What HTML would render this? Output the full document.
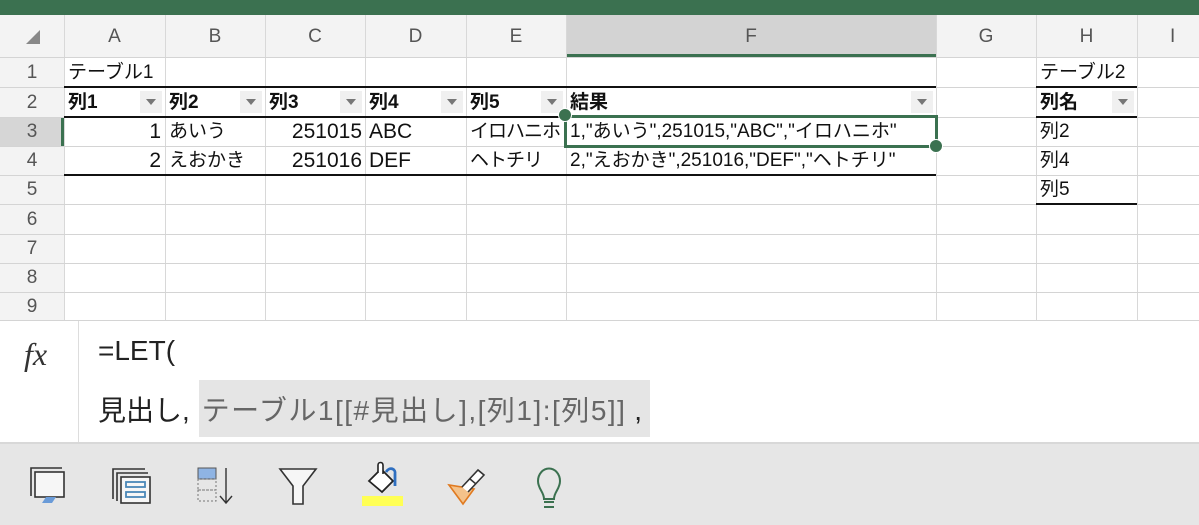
<!DOCTYPE html>
<html><head><meta charset="utf-8"><style>
*{margin:0;padding:0;box-sizing:border-box}
body{width:1199px;height:525px;overflow:hidden;background:#fff;position:relative;font-family:"Liberation Sans","Noto Sans CJK JP",sans-serif;}
.a{position:absolute}
.hl{position:absolute;background:#d4d4d4}
.vl{position:absolute;background:#d8d8d8;width:1px}
.ch{position:absolute;top:16px;height:41px;line-height:41px;text-align:center;font-size:19px;color:#555}
.rh{position:absolute;left:0;width:64px;text-align:center;font-size:19px;color:#555;height:29px;line-height:29px}
.c{position:absolute;font-size:19px;color:#111;height:29px;line-height:29px;white-space:nowrap}
.n{font-size:21px}
.b{font-weight:bold}
.dd{position:absolute;width:0;height:0;border-left:5px solid transparent;border-right:5px solid transparent;border-top:6px solid #777}
.ddb{position:absolute;width:22px;height:22px;background:#f0f0f0}
.tl{position:absolute;height:2px;background:#111}
</style></head><body>
<div class="a" style="left:0;top:0;width:1199px;height:15px;background:#3b7150"></div>
<div class="a" style="left:0;top:15px;width:1199px;height:42px;background:#f3f3f3"></div>
<div class="a" style="left:566px;top:15px;width:370px;height:42px;background:#d3d3d3"></div>
<div class="a" style="left:566px;top:54px;width:370px;height:3px;background:#3b7150"></div>
<div class="a" style="left:0;top:57px;width:64px;height:264px;background:#f3f3f3"></div>
<div class="a" style="left:0;top:117px;width:64px;height:29px;background:#d6d6d6"></div>
<div class="a" style="left:61px;top:117px;width:3px;height:29px;background:#3b7150"></div>
<svg class="a" style="left:24px;top:28px" width="18" height="18"><polygon points="16,2 16,16 2,16" fill="#888"/></svg>
<div class="vl" style="left:64px;top:15px;height:306px"></div>
<div class="vl" style="left:165px;top:15px;height:306px"></div>
<div class="vl" style="left:265px;top:15px;height:306px"></div>
<div class="vl" style="left:365px;top:15px;height:306px"></div>
<div class="vl" style="left:466px;top:15px;height:306px"></div>
<div class="vl" style="left:566px;top:15px;height:306px"></div>
<div class="vl" style="left:936px;top:15px;height:306px"></div>
<div class="vl" style="left:1036px;top:15px;height:306px"></div>
<div class="vl" style="left:1137px;top:15px;height:306px"></div>
<div class="hl" style="left:0;top:57px;width:1199px;height:1px"></div>
<div class="hl" style="left:0;top:87px;width:1199px;height:1px"></div>
<div class="hl" style="left:0;top:117px;width:1199px;height:1px"></div>
<div class="hl" style="left:0;top:146px;width:1199px;height:1px"></div>
<div class="hl" style="left:0;top:175px;width:1199px;height:1px"></div>
<div class="hl" style="left:0;top:204px;width:1199px;height:1px"></div>
<div class="hl" style="left:0;top:234px;width:1199px;height:1px"></div>
<div class="hl" style="left:0;top:263px;width:1199px;height:1px"></div>
<div class="hl" style="left:0;top:292px;width:1199px;height:1px"></div>
<div class="hl" style="left:0;top:320px;width:1199px;height:1px"></div>
<div class="ch" style="left:64px;width:101px">A</div>
<div class="ch" style="left:165px;width:100px">B</div>
<div class="ch" style="left:265px;width:100px">C</div>
<div class="ch" style="left:365px;width:101px">D</div>
<div class="ch" style="left:466px;width:100px">E</div>
<div class="ch" style="left:566px;width:370px">F</div>
<div class="ch" style="left:936px;width:100px">G</div>
<div class="ch" style="left:1036px;width:101px">H</div>
<div class="ch" style="left:1137px;width:62px;text-align:left;padding-left:33px">I</div>
<div class="rh" style="top:58px">1</div><div class="rh" style="top:88px">2</div><div class="rh" style="top:117px">3</div><div class="rh" style="top:146px">4</div><div class="rh" style="top:175px">5</div><div class="rh" style="top:205px">6</div><div class="rh" style="top:234px">7</div><div class="rh" style="top:263px">8</div><div class="rh" style="top:292px">9</div>
<div class="tl" style="left:64px;top:86px;width:872px"></div>
<div class="tl" style="left:64px;top:116px;width:872px"></div>
<div class="tl" style="left:64px;top:174px;width:872px"></div>
<div class="tl" style="left:1036px;top:86px;width:101px"></div>
<div class="tl" style="left:1036px;top:116px;width:101px"></div>
<div class="tl" style="left:1036px;top:203px;width:101px"></div>
<div class="c" style="left:68px;top:58px">テーブル1</div>
<div class="c" style="left:1040px;top:58px">テーブル2</div>
<div class="c b" style="left:68px;top:88px">列1</div>
<div class="c b" style="left:169px;top:88px">列2</div>
<div class="c b" style="left:269px;top:88px">列3</div>
<div class="c b" style="left:369px;top:88px">列4</div>
<div class="c b" style="left:470px;top:88px">列5</div>
<div class="c b" style="left:570px;top:88px">結果</div>
<div class="c b" style="left:1040px;top:88px">列名</div>
<div class="ddb" style="left:140px;top:91px"></div><div class="dd" style="left:146px;top:99px"></div>
<div class="ddb" style="left:240px;top:91px"></div><div class="dd" style="left:246px;top:99px"></div>
<div class="ddb" style="left:340px;top:91px"></div><div class="dd" style="left:346px;top:99px"></div>
<div class="ddb" style="left:441px;top:91px"></div><div class="dd" style="left:447px;top:99px"></div>
<div class="ddb" style="left:541px;top:91px"></div><div class="dd" style="left:547px;top:99px"></div>
<div class="ddb" style="left:911px;top:91px"></div><div class="dd" style="left:917px;top:99px"></div>
<div class="ddb" style="left:1112px;top:91px"></div><div class="dd" style="left:1118px;top:99px"></div>
<div class="c n" style="left:64px;width:97px;text-align:right;top:117px">1</div>
<div class="c n" style="left:64px;width:97px;text-align:right;top:146px">2</div>
<div class="c" style="left:169px;top:117px">あいう</div>
<div class="c" style="left:169px;top:146px">えおかき</div>
<div class="c n" style="left:265px;width:97px;text-align:right;top:117px">251015</div>
<div class="c n" style="left:265px;width:97px;text-align:right;top:146px">251016</div>
<div class="c n" style="left:369px;top:117px">ABC</div>
<div class="c n" style="left:369px;top:146px">DEF</div>
<div class="c" style="left:470px;top:117px;letter-spacing:-1px">イロハニホ</div>
<div class="c" style="left:470px;top:146px;letter-spacing:-1px">ヘトチリ</div>
<div class="c" style="left:570px;top:117px">1,"あいう",251015,"ABC","イロハニホ"</div>
<div class="c" style="left:570px;top:146px">2,"えおかき",251016,"DEF","ヘトチリ"</div>
<div class="c" style="left:1040px;top:117px">列2</div>
<div class="c" style="left:1040px;top:146px">列4</div>
<div class="c" style="left:1040px;top:175px">列5</div>
<div class="a" style="left:564px;top:115px;width:374px;height:33px;border:3px solid #3b7150;border-top:none"></div>
<div class="a" style="left:566px;top:115px;width:370px;height:3px;background:#3b7150"></div>
<div class="a" style="left:558px;top:108px;width:14px;height:14px;border-radius:50%;background:#3b7150;border:1px solid #fff"></div>
<div class="a" style="left:929px;top:139px;width:14px;height:14px;border-radius:50%;background:#3b7150;border:1px solid #fff"></div>
<div class="a" style="left:78px;top:321px;width:1px;height:122px;background:#ddd"></div>
<div class="a" style="left:24px;top:336px;font-family:'Liberation Serif',serif;font-style:italic;font-size:32px;color:#333">fx</div>
<div class="a" style="left:199px;top:380px;width:451px;height:57px;background:#e5e5e5"></div>
<div class="a" style="left:98px;top:335px;font-size:28px;color:#222;white-space:nowrap">=LET(</div>
<div class="a" style="left:98px;top:389px;font-size:28px;color:#222;white-space:nowrap">見出し, <span style="color:#666;letter-spacing:1.5px;margin-left:4px">テーブル1[[#見出し],[列1]:[列5]]</span> ,</div>
<div class="a" style="left:0;top:442px;width:1199px;height:83px;background:#e6e6e6;border-top:2px solid #d8d8d8"></div>
<svg class="a" style="left:0;top:442px" width="600" height="83">
<g fill="none" stroke="#333" stroke-width="1.6">
<path d="M31 54V26h31"/><rect x="35" y="30" width="29" height="25" fill="#f6f6f6"/>
<path d="M113 57V27h32"/><path d="M117 59V31h31"/><rect x="121" y="35" width="29" height="26" fill="#f6f6f6"/>
</g>
<path d="M42 61l4-6h10l-4 6z" fill="#6a9bd8"/>
<g fill="none" stroke="#4a88b8" stroke-width="1.8"><rect x="126" y="40" width="19" height="5"/><rect x="126" y="50" width="19" height="5"/></g>
<rect x="198" y="26" width="18" height="11" fill="#8fb4e3" stroke="#555"/>
<g fill="none" stroke="#777" stroke-dasharray="2,2"><rect x="198" y="37" width="18" height="11"/><rect x="198" y="48" width="18" height="11"/></g>
<path d="M226 26v34M220 54l6 7 6-7" fill="none" stroke="#333" stroke-width="1.4"/>
<path d="M280 27h36l-13 17v18h-10V44z" fill="#f6f6f6" stroke="#333" stroke-width="1.6"/>
<rect x="362" y="54" width="41" height="10" fill="#ffff55"/>
<path d="M369 39l12-12 12 12-11 11z" fill="#fff" stroke="#222" stroke-width="1.8"/><path d="M378 31v-8a2.5 2.5 0 0 1 5 0v9" fill="#fff" stroke="#222" stroke-width="1.6"/>
<path d="M386 30c4-6 10-3 9 2v12" fill="none" stroke="#2f6fc0" stroke-width="2.8"/>
<path d="M449 43l14 19 11-15z" fill="#f4c28a" stroke="#e07a20" stroke-width="1.6"/><path d="M462 45l16-17 6 5-16 17" fill="#fff" stroke="#333" stroke-width="1.6"/><path d="M470 37l6 5" stroke="#333" stroke-width="1.5"/>
<path d="M538 39a11 12.5 0 1 1 22 0c0 8-6 11-6 18h-10c0-7-6-10-6-18z" fill="none" stroke="#3b7150" stroke-width="2"/><path d="M544 60h10M544 65h10" stroke="#3b7150" stroke-width="2"/>
</svg>
</body></html>
